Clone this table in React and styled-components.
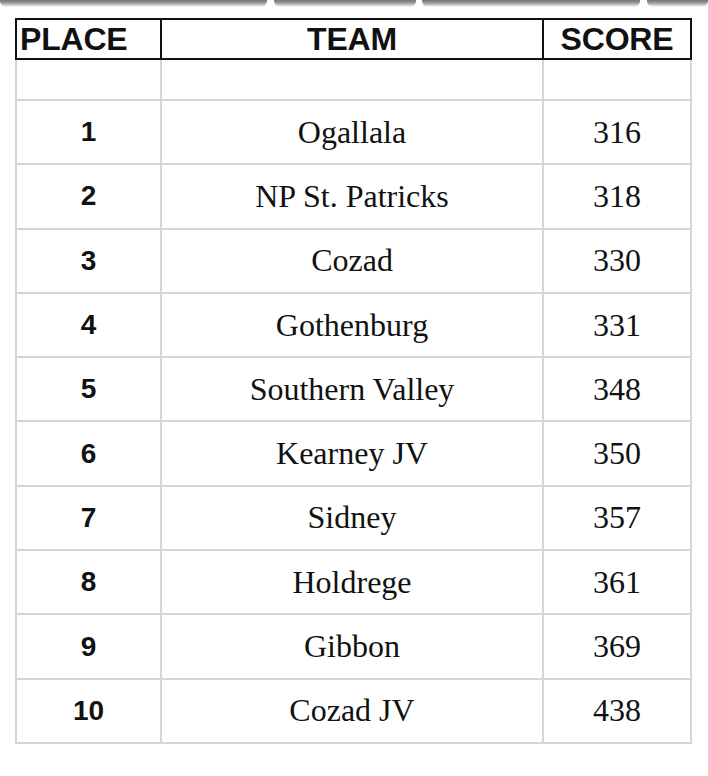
import styled, { createGlobalStyle } from "styled-components"

const GlobalStyle = createGlobalStyle`
    html, body {
        margin: 0;
        padding: 0;
        background: #fff;
    }
    body {
        font-family: "Liberation Sans", Arial, sans-serif;
        color: #111;
    }
`

const results = [
    { place: 1, team: "Ogallala", score: 316 },
    { place: 2, team: "NP St. Patricks", score: 318 },
    { place: 3, team: "Cozad", score: 330 },
    { place: 4, team: "Gothenburg", score: 331 },
    { place: 5, team: "Southern Valley", score: 348 },
    { place: 6, team: "Kearney JV", score: 350 },
    { place: 7, team: "Sidney", score: 357 },
    { place: 8, team: "Holdrege", score: 361 },
    { place: 9, team: "Gibbon", score: 369 },
    { place: 10, team: "Cozad JV", score: 438 },
]

const App = () => {
    return (
        <Page>
            <GlobalStyle />
            <TabEdges>
                <TabEdge $w={267} />
                <TabEdge $w={142} />
                <TabEdge $w={218} />
                <TabEdge $w={61} />
            </TabEdges>
            <Board>
                <HeadRow>
                    <HeadCell $align="left">PLACE</HeadCell>
                    <HeadCell>TEAM</HeadCell>
                    <HeadCell>SCORE</HeadCell>
                </HeadRow>
                <BodyRow $h={41}>
                    <Cell />
                    <Cell />
                    <Cell />
                </BodyRow>
                {results.map((r) => (
                    <BodyRow key={r.place}>
                        <PlaceCell>{r.place}</PlaceCell>
                        <Cell>{r.team}</Cell>
                        <Cell>{r.score}</Cell>
                    </BodyRow>
                ))}
            </Board>
        </Page>
    )
}

export default App


const Page = styled.div`
    width: 708px;
    min-height: 776px;
    background: #fff;
`

const TabEdges = styled.div`
    display: flex;
    justify-content: space-between;
    height: 7px;
`

const TabEdge = styled.span`
    width: ${(p) => p.$w}px;
    height: 7px;
    border-radius: 0 0 6px 6px;
    background: linear-gradient(#737373 0%, #a0a0a0 45%, #e4e4e4 85%, #fff 100%);
`

const Board = styled.div`
    margin: 11px 16px 0 15px;
`

const cols = `143px 1fr 148px`

const HeadRow = styled.div`
    display: grid;
    grid-template-columns: ${cols};
    height: 42px;
    box-sizing: border-box;
    border: 2px solid #111;

    > * + * {
        border-left: 2px solid #111;
    }
`

const HeadCell = styled.div`
    display: flex;
    align-items: center;
    justify-content: ${(p) => (p.$align === "left" ? "flex-start" : "center")};
    padding-left: ${(p) => (p.$align === "left" ? "3px" : "0")};
    font-family: "Liberation Sans", Arial, sans-serif;
    font-weight: 700;
    font-size: 32px;
    letter-spacing: -0.2px;
`

const BodyRow = styled.div`
    display: grid;
    grid-template-columns: ${cols};
    height: ${(p) => p.$h || 64.3}px;
    box-sizing: border-box;
    border: 2px solid #d5d5d7;
    border-top: none;

    > * + * {
        border-left: 2px solid #d5d5d7;
    }
`

const Cell = styled.div`
    display: flex;
    align-items: center;
    justify-content: center;
    font-family: "Liberation Serif", "Times New Roman", serif;
    font-size: 32px;
`

const PlaceCell = styled(Cell)`
    font-family: "Liberation Sans", Arial, sans-serif;
    font-weight: 700;
    font-size: 28px;
`
